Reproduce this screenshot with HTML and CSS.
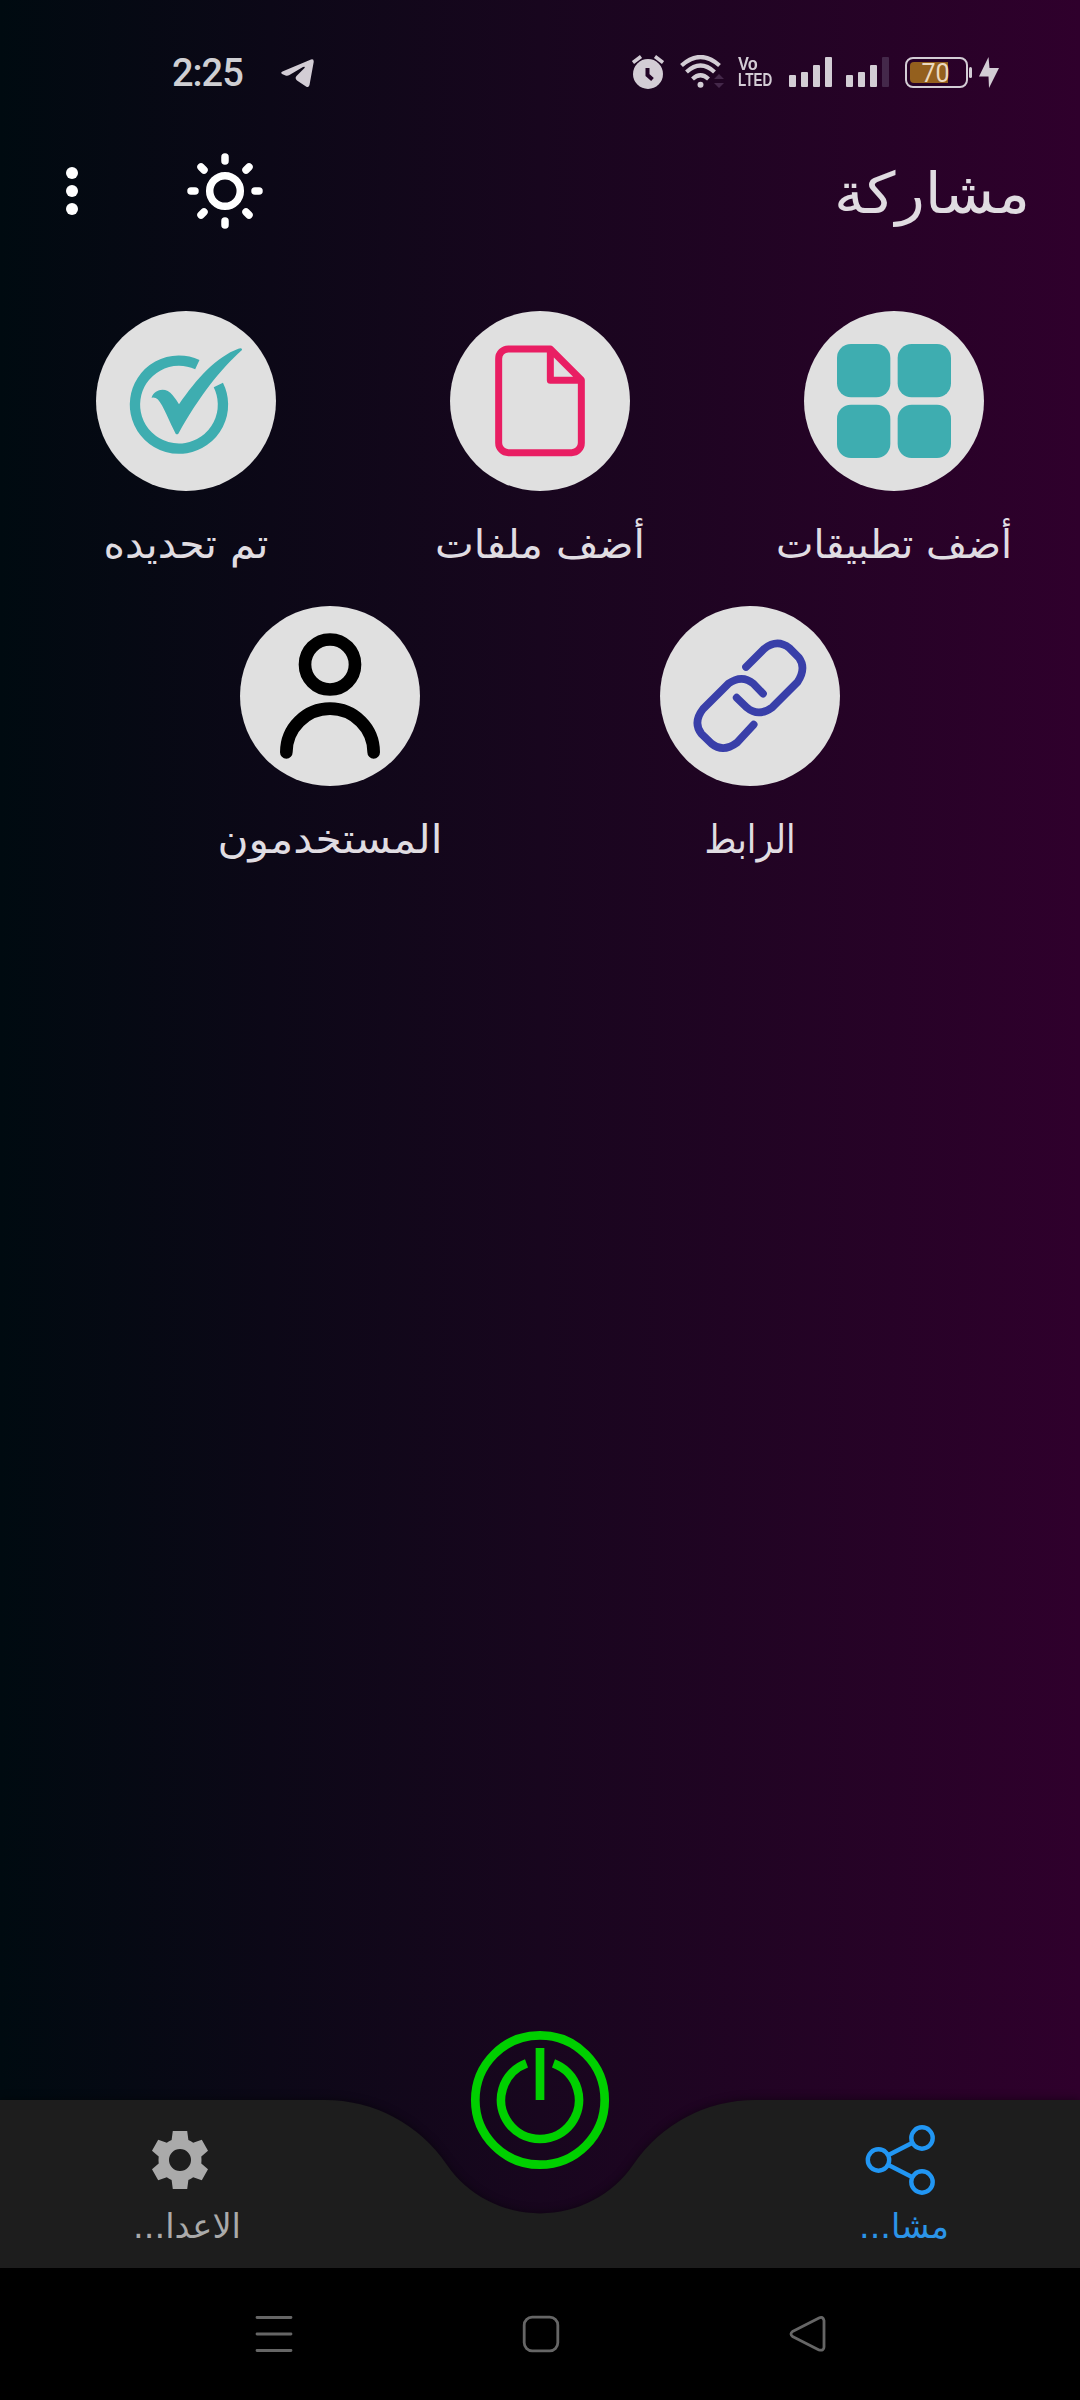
FILE: index.html
```html
<!DOCTYPE html>
<html lang="ar">
<head>
<meta charset="utf-8">
<title>مشاركة</title>
<link rel="stylesheet" href="styles.css">
</head>
<body>
<div class="screen">
  <div class="status">
    <span class="time">2:25</span>
    <svg class="telegram" width="34" height="30" viewBox="281 59 34 30"><path d="M311 60.500Q314 59.500 313.700 63L309.500 86Q308.700 89 306 87.500L297 81.500Q294.500 79.500 296.500 77L304.500 69Q305.500 67 303 68L289 76.300Q287.500 77 285.500 76.500L282 75Q280 73.500 283 72.300Z"/></svg>
    <div class="indicators">
      <svg width="32" height="36" viewBox="632 55 32 36"><circle cx="648" cy="74" r="15"/><path class="line" stroke-width="3.500" d="M633 62.500l8-6M663 62.500l-8-6"/><path class="cut" d="M647.500 68v7l5 4.500"/></svg>
      <svg class="wifi" width="44" height="36" viewBox="680 55 44 36"><path class="line" stroke-width="4.200" d="M681.500 65.500Q700.500 48.500 719.500 65.500M686.500 72Q700.500 59 714.500 72M692.500 79Q700.500 71.500 708.500 79"/><circle cx="700.500" cy="84.700" r="3"/><path class="dim" d="M714 79l5-5 5 5zM714 83h10l-5 5z"/></svg>
      <div class="volte"><span class="vo">Vo</span><span class="lte">LTED</span></div>
      <svg width="43" height="36" viewBox="789 55 43 36"><rect x="789" y="75" width="7" height="12" rx="1"/><rect x="801" y="72" width="7" height="15" rx="1"/><rect x="813" y="65" width="7" height="22" rx="1"/><rect x="825" y="57" width="7" height="30" rx="1"/></svg>
      <svg width="43" height="36" viewBox="789 55 43 36"><rect x="789" y="75" width="7" height="12" rx="1"/><rect x="801" y="72" width="7" height="15" rx="1"/><rect x="813" y="65" width="7" height="22" rx="1"/><rect class="dim" x="825" y="57" width="7" height="30" rx="1"/></svg>
      <svg width="67" height="36" viewBox="905 55 67 36"><rect class="line" stroke-width="2" x="906" y="58" width="61" height="29" rx="7"/><path class="charge" d="M914 62h34v21h-34q-4 0-4-4v-13q0-4 4-4z"/><rect x="969" y="67" width="3" height="11" rx="1.500"/><text class="level" x="935.500" y="81.500">70</text></svg>
      <svg class="bolt" width="20" height="36" viewBox="979 55 20 36"><path d="M988.500 57l-9.500 19.500h9.500l.5 11.500 10-20h-9.500z"/></svg>
    </div>
  </div>

  <div class="toolbar">
    <svg width="24" height="60" viewBox="60 161 24 60"><circle cx="72" cy="173" r="6"/><circle cx="72" cy="191" r="6"/><circle cx="72" cy="209" r="6"/></svg>
    <svg class="sun" width="76" height="76" viewBox="-38 -38 76 76"><circle r="15.300"/><path d="M0-34v4M0 34v-4M-34 0h4M34 0h-4M-24-24l3 3M24-24l-3 3M-24 24l3-3M24 24l-3-3"/></svg>
    <svg class="title" width="192" height="90" viewBox="0 0 192 90"><text x="96" y="66.500" font-size="57" textLength="196" lengthAdjust="spacingAndGlyphs">مشاركة</text></svg>
  </div>

  <div class="tiles three">
    <div class="tile">
      <svg class="disc" viewBox="108 63 540 540"><path class="teal-line" d="M412 224A132 132 0 1 0 475 285"/><path class="teal" d="M275 322C285 297 318 290 338 316Q348 328 357 343C410 265 470 200 535 176Q548 173 546 180C480 240 420 315 355 431Q351 434 347 431C330 400 310 345 293 328Q286 321 275 323Z"/></svg>
      <svg class="label" width="354" height="115"><text x="177" y="66.500" textLength="165" lengthAdjust="spacingAndGlyphs">تم تحديده</text></svg>
    </div>
    <div class="tile">
      <svg class="disc" viewBox="150 63 540 540"><path class="file" d="M451 177H325A29 29 0 0 0 296 206V459A29 29 0 0 0 325 488H515A29 29 0 0 0 544 459V270ZV271H544"/></svg>
      <svg class="label" width="354" height="115"><text x="177" y="66.500" textLength="210" lengthAdjust="spacingAndGlyphs">أضف ملفات</text></svg>
    </div>
    <div class="tile">
      <svg class="disc" viewBox="162 63 540 540"><g class="teal"><rect x="261" y="162" width="160" height="160" rx="42"/><rect x="443" y="162" width="160" height="160" rx="42"/><rect x="261" y="344" width="160" height="160" rx="42"/><rect x="443" y="344" width="160" height="160" rx="42"/></g></svg>
      <svg class="label" width="354" height="115"><text x="177" y="66.500" textLength="236" lengthAdjust="spacingAndGlyphs">أضف تطبيقات</text></svg>
    </div>
  </div>
  <div class="tiles two">
    <div class="tile">
      <svg class="disc" viewBox="120 48 540 540"><g class="user"><circle cx="390" cy="223.500" r="75"/><path d="M259 487A131 131 0 0 1 521 487"/></g></svg>
      <svg class="label" width="354" height="115"><text x="177" y="66.500" textLength="225" lengthAdjust="spacingAndGlyphs">المستخدمون</text></svg>
    </div>
    <div class="tile">
      <svg class="disc" viewBox="90 48 540 540"><path class="link" d="M348 231L402 177Q441 145 478 174L507 203Q530 235 502 277L427 352Q385 382 351 353L320 323M399 311L370 281Q336 252 295 281L219 357Q188 397 214 431L245 461Q279 489 321 458L371 404"/></svg>
      <svg class="label" width="354" height="115"><text x="177" y="66.500" textLength="91" lengthAdjust="spacingAndGlyphs">الرابط</text></svg>
    </div>
  </div>

  <div class="bottom">
    <svg class="bar" width="1080" height="198" viewBox="0 -30 1080 198"><path d="M0 0H325A147 147 0 0 1 446.300 64A113.500 113.500 0 0 0 633.700 64A147 147 0 0 1 755 0H1080V168H0Z"/></svg>
    <svg class="power" width="140" height="140" viewBox="-70 -70 140 140"><circle r="64.700"/><path d="M-13.500-36.600A39 39 0 1 0 13.500-36.600M0-52V0"/></svg>
    <div class="tab">
      <svg width="72" height="72" viewBox="-36 -36 72 72"><path fill-rule="evenodd" d="M-7.200-29H7.200L8.400-20Q11-19 13.200-17.300L21.800-20.300 28-9.300 21.300-3.500Q21.700 0 21.300 3.500L28 9.300 21.800 20.300 13.200 17.300Q11 19 8.400 20L7.200 29H-7.200L-8.400 20Q-11 19-13.200 17.300L-21.800 20.300-28 9.300-21.300 3.500Q-21.700 0-21.300-3.500L-28-9.300-21.800-20.300-13.200-17.300Q-11-19-8.400-20ZM0-11A11 11 0 0 0 0 11A11 11 0 0 0 0-11Z"/></svg>
      <svg class="caption" width="160" height="60"><text x="87" y="42" textLength="108" lengthAdjust="spacingAndGlyphs">الاعدا...</text></svg>
    </div>
    <div class="tab active">
      <svg class="share" width="72" height="72" viewBox="864 2124 72 72"><circle cx="878.500" cy="2160" r="10.700"/><circle cx="922" cy="2138" r="10.700"/><circle cx="922" cy="2182" r="10.700"/><path d="M888.500 2155l23.500-12M888.500 2165l23.500 12"/></svg>
      <svg class="caption" width="160" height="60"><text x="84" y="42" textLength="90" lengthAdjust="spacingAndGlyphs">مشا...</text></svg>
    </div>
  </div>
</div>
<div class="system">
  <svg width="40" height="40" viewBox="254 2314 40 40"><path d="M257 2317.500h34M257 2334h34M257 2350.500h34"/></svg>
  <svg width="40" height="40" viewBox="522 2314 40 40"><rect x="525.200" y="2317.200" width="33.600" height="33.600" rx="8"/></svg>
  <svg width="40" height="40" viewBox="788 2314 40 40"><path stroke-linejoin="round" d="M792.500 2331.500Q789.500 2334 792.500 2336.500L819 2350Q824 2351 824 2347V2320.500Q823 2316 819 2318Z"/></svg>
</div>
</body>
</html>
```
FILE: styles.css
```css
* { box-sizing: border-box; }
body { margin: 0; width: 1080px; background: #000; font-family: Roboto, "DejaVu Sans", sans-serif; }
svg { display: block; flex: none; }
.screen { display: flex; flex-direction: column; height: 2268px; background: linear-gradient(90deg, #000a10, #18061e 50%, #2f002c); }
.status { display: flex; align-items: center; height: 98px; padding: 48px 81px 0 172px; color: #d0ccd2; }
.status svg { fill: #d3cdd5; }
.status .line { fill: none; stroke: #d3cdd5; }
.status .cut { fill: none; stroke: #220426; stroke-width: 4; }
.status .dim { fill: #44284a; }
.time { width: 71px; font-size: 38px; font-weight: 500; line-height: 50px; letter-spacing: -1px; color: #cfcfd3; }
.telegram { margin-left: 38px; }
.indicators { display: flex; margin-left: auto; }
.indicators > * { margin-left: 16px; }
.indicators > :nth-child(3), .indicators > :nth-child(5) { margin-left: 14px; }
.indicators .bolt { margin-left: 7px; }
.volte { display: flex; flex-direction: column; width: 35px; height: 36px; padding-top: 1px; font: 700 18px/16px "Liberation Sans", sans-serif; color: #d3cdd5; }
.volte span { display: block; width: max-content; transform-origin: 0 50%; }
.vo { transform: scaleX(.91); }
.lte { transform: scaleX(.75); }
.charge { fill: #94601e; }
.level { font-size: 25px; text-anchor: middle; fill: #ecd9c0; }

.toolbar { display: flex; align-items: center; height: 186px; padding: 0 52px 0 60px; }
.toolbar svg { fill: #fff; }
.toolbar .sun { margin-left: 103px; fill: none; stroke: #fff; stroke-width: 7.500px; stroke-linecap: round; }
.title { margin-left: auto; overflow: visible; }
.title text { fill: #e0dce1; }
.title text, .label text, .caption text { font-family: "DejaVu Sans", sans-serif; text-anchor: middle; direction: rtl; }

.tiles { display: grid; height: 295px; }
.three { grid-template-columns: repeat(3, 354px); padding: 0 9px; margin-top: 27px; }
.two { grid-template-columns: repeat(2, 420px); padding: 0 120px; }
.tile { display: flex; flex-direction: column; align-items: center; }
.disc { width: 180px; height: 180px; border-radius: 50%; background: #e0e0e0; }
.label text { font-size: 40px; fill: #e0dde2; }
.teal { fill: #3eadb0; }
.teal-line { fill: none; stroke: #3eadb0; stroke-width: 31px; }
.file { fill: none; stroke: #e91e63; stroke-width: 21px; stroke-linejoin: round; }
.user { fill: none; stroke: #000; stroke-width: 38px; stroke-linecap: round; }
.link { fill: none; stroke: #393fa9; stroke-width: 23px; stroke-linecap: round; stroke-linejoin: round; }

.bottom { position: relative; display: flex; justify-content: space-between; height: 168px; margin-top: auto; padding: 24px 100px 0; }
.bar { position: absolute; left: 0; top: -30px; fill: #1d1d1d; filter: drop-shadow(0 -1px 4px rgba(0,0,0,.4)); }
.power { position: absolute; left: 470px; top: -70px; fill: none; stroke: #00d000; stroke-width: 8.700px; }
.tab { position: relative; display: flex; flex-direction: column; align-items: center; width: 160px; fill: #aaa; }
.caption text { font-size: 34px; }
.active { fill: #2b94e8; }
.share { fill: none; stroke: #2196f3; stroke-width: 4.400px; }
.system { display: flex; gap: 227px; height: 132px; padding: 46px 0 0 254px; }
.system svg { fill: none; stroke: #666; stroke-width: 2.800px; stroke-linecap: round; }
```
